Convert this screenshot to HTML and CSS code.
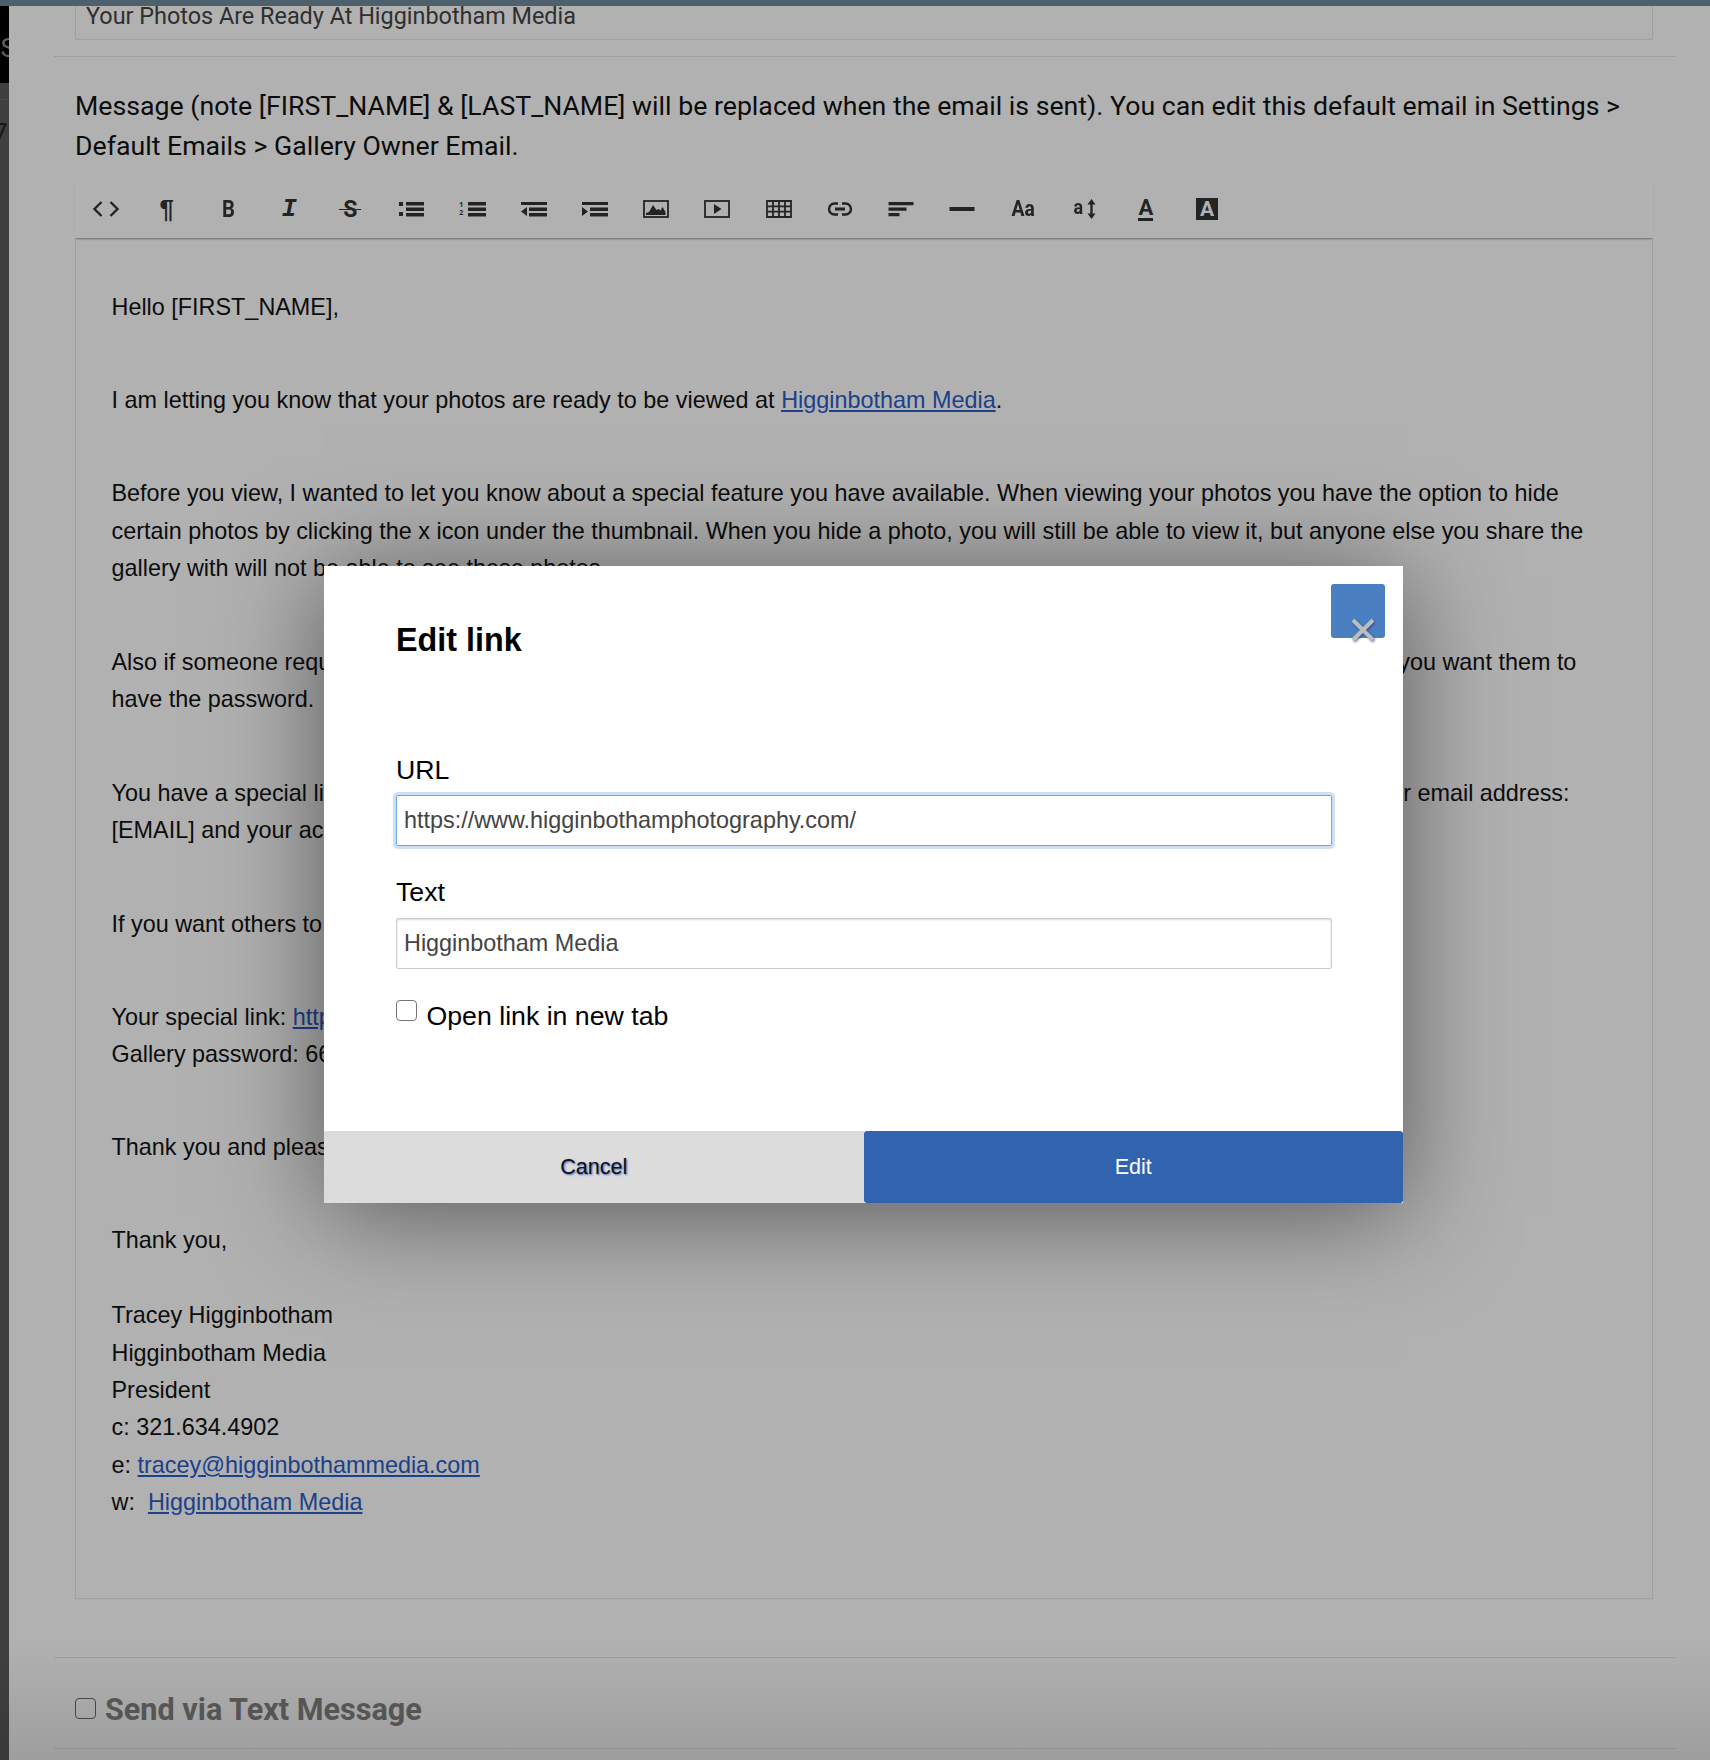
FILE: index.html
```html
<!DOCTYPE html>
<html lang="en">
<head>
<meta charset="utf-8">
<title>Edit link</title>
<link rel="stylesheet" href="styles.css">
</head>
<body>
<div class="topbar"></div>
<div class="shell">
  <aside class="rail">
    <div class="rail-head"><span class="rail-s">S</span></div>
    <div class="rail-line"></div>
    <span class="rail-num">7</span>
  </aside>
  <main class="main">
    <div class="subject">Your Photos Are Ready At Higginbotham Media</div>
    <hr class="rule rule-a">
    <p class="note">Message (note [FIRST_NAME] &amp; [LAST_NAME] will be replaced when the email is sent). You can edit this default email in Settings &gt; Default Emails &gt; Gallery Owner Email.</p>
    <div class="toolbar">
      <span class="tool"><svg class="ico" viewBox="0 0 28 28"><path d="M9.500 7 2.500 14l7 7M18.500 7l7 7-7 7" class="ln"/></svg></span>
      <span class="tool"><span class="glyph para">¶</span></span>
      <span class="tool"><span class="glyph bold">B</span></span>
      <span class="tool"><span class="glyph ital">I</span></span>
      <span class="tool"><span class="glyph strike">S</span></span>
      <span class="tool"><svg class="ico" viewBox="0 0 28 28"><path d="M1 7h4v4H1zM1 17h4v4H1zM8 7h18v3.500H8zM8 12.500h18V16H8zM8 18h18v3.500H8z"/></svg></span>
      <span class="tool"><span class="ol-nums">1<br>2</span><svg class="ico ol" viewBox="0 0 18 28"><path d="M0 7h18v3.500H0zM0 12.500h18V16H0zM0 18h18v3.500H0z"/></svg></span>
      <span class="tool"><svg class="ico" viewBox="0 0 28 28"><path d="M1 7h26v3H1zM9 12.500h18V16H9zM9 18h18v3.500H9zM7 12v9l-6-4.500z"/></svg></span>
      <span class="tool"><svg class="ico" viewBox="0 0 28 28"><path d="M1 7h26v3H1zM9 12.500h18V16H9zM9 18h18v3.500H9zM1 12v9l6-4.500z"/></svg></span>
      <span class="tool"><svg class="ico" viewBox="0 0 28 28"><rect x="2" y="6" width="24" height="16" class="box"/><path d="M4 20v-2l3-1 4-7 3.500 5 2-1 2 1.500 2-3.500 3 5v3z"/></svg></span>
      <span class="tool"><svg class="ico" viewBox="0 0 28 28"><rect x="2" y="6" width="24" height="16" class="box"/><path d="M11 9v10l7.500-5z"/></svg></span>
      <span class="tool"><svg class="ico" viewBox="0 0 28 28"><path d="M2 6h24v16H2zM2 11.300h24M2 16.600h24M8 6v16M14 6v16M20 6v16" class="box"/></svg></span>
      <span class="tool"><svg class="ico" viewBox="0 0 28 28"><path d="M12 8.500H8.500a5.500 5.500 0 0 0 0 11H12M16 8.500h3.500a5.500 5.500 0 0 1 0 11H16" class="ln"/><path d="M9 12.500h10V15.500H9z"/></svg></span>
      <span class="tool"><svg class="ico" viewBox="0 0 28 28"><path d="M1.500 7h25v3.300h-25zM1.500 12.500h18v3.300h-18zM1.500 18h11v3.300h-11z"/></svg></span>
      <span class="tool"><svg class="ico" viewBox="0 0 28 28"><path d="M1.500 12h25v4h-25z"/></svg></span>
      <span class="tool"><span class="glyph aa">Aa</span></span>
      <span class="tool tool-size"><span class="glyph size-a">a</span><svg class="arrow" viewBox="0 0 10 22"><path d="M5 0 9.500 6H6.300v10h3.200L5 22 .5 16h3.200V6H.5z"/></svg></span>
      <span class="tool"><span class="glyph under">A</span></span>
      <span class="tool"><span class="glyph boxed">A</span></span>
    </div>
    <div class="editor">
      <p>Hello [FIRST_NAME],</p>
      <p>I am letting you know that your photos are ready to be viewed at <a href="#">Higginbotham Media</a>.</p>
      <p>Before you view, I wanted to let you know about a special feature you have available. When viewing your photos you have the option to hide<br>certain photos by clicking the x icon under the thumbnail. When you hide a photo, you will still be able to view it, but anyone else you share the<br>gallery with will not be able to see these photos.</p>
      <p>Also if someone requests access to your gallery, you can then approve them in your account and send them the password if you want them to<br>have the password.</p>
      <p>You have a special link that allows you to open all of those photos at any time. You will only need to enter your name and your email address:<br>[EMAIL] and your access code.</p>
      <p>If you want others to see your photos, simply send them the link and the password below.</p>
      <p>Your special link: <a href="#">https://www.higginbothamphotography.com/</a><br>Gallery password: 6677</p>
      <p class="tight">Thank you and please let me know if you have any questions.</p>
      <p>Thank you,<br><br>Tracey Higginbotham<br>Higginbotham Media<br>President<br>c: 321.634.4902<br>e: <a href="#">tracey@higginbothammedia.com</a><br>w:&nbsp; <a href="#">Higginbotham Media</a></p>
    </div>
    <hr class="rule rule-b">
    <label class="sms"><input type="checkbox" class="check check-sms"><span>Send via Text Message</span></label>
    <hr class="rule rule-c">
  </main>
</div>
<div class="overlay"></div>
<section class="modal">
  <span class="close"><svg class="close-x" viewBox="0 0 26 26"><path d="M3 3l20 20M23 3 3 23"/></svg></span>
  <div class="modal-body">
    <h2 class="modal-title">Edit link</h2>
    <div class="label label-url">URL</div>
    <div class="field field-focus">https://www.higginbothamphotography.com/</div>
    <div class="label label-text">Text</div>
    <div class="field">Higginbotham Media</div>
    <label class="newtab"><input type="checkbox" class="check"><span>Open link in new tab</span></label>
  </div>
  <div class="modal-foot">
    <span class="btn btn-cancel">Cancel</span>
    <span class="btn btn-edit">Edit</span>
  </div>
</section>
</body>
</html>
```
FILE: styles.css
```css
* { box-sizing: border-box; }
html, body { margin: 0; padding: 0; }
body {
  width: 1710px;
  height: 1760px;
  overflow: hidden;
  background: #fff;
  color: #111;
  font-family: "Liberation Sans", Arial, sans-serif;
  position: relative;
}
.topbar { height: 6px; background: #6f8a9c; }
.shell { display: flex; height: 1754px; }
.rail { width: 9px; flex: none; background: #5c5c5c; overflow: hidden; display: flex; flex-direction: column; }
.rail-head { height: 77px; background: #000; padding-top: 25px; display: flex; justify-content: flex-end; }
.rail-s { font: 400 26px/34px Roboto, sans-serif; color: #8a8a8a; margin-right: -7px; }
.rail-line { height: 1px; margin-top: 16px; background: #3c6fb0; }
.rail-num { font: 400 26px/34px Roboto, sans-serif; color: #222; margin-top: 16px; margin-left: -7px; }
.main { flex: 1; padding: 0 35px 0 45px; font-family: Roboto, sans-serif; }
.subject {
  margin: 0 22px 0 21px;
  height: 34px;
  padding: 0 10px;
  border: 1px solid #e6e6e6;
  border-top: 0;
  border-radius: 0 0 3px 3px;
  font-size: 23.4px;
  line-height: 20px;
  color: #444;
}
.rule { margin: 0; border: 0; border-top: 1px solid #e4e4e4; }
.rule-a { margin-top: 16px; }
.note { margin: 29px 22px 14px 21px; font-size: 26.7px; line-height: 40px; color: #111; }
.toolbar {
  margin: 0 22px 0 21px;
  height: 58px;
  display: flex;
  align-items: center;
  background: #fff;
  box-shadow: 0 2px 2px -1px rgba(0,0,0,.4);
  position: relative;
  color: #333;
}
.tool { width: 61.2px; height: 30px; flex: none; display: flex; align-items: center; justify-content: center; position: relative; }
.ico { width: 28px; height: 28px; fill: #333; display: block; }
.ln { fill: none; stroke: #333; stroke-width: 2.4; }
.box { fill: none; stroke: #333; stroke-width: 1.8; }
.glyph { font-family: Roboto, sans-serif; font-weight: 700; color: #333; line-height: 1; display: block; }
.para { font-size: 26px; font-family: "Liberation Sans", sans-serif; }
.bold { font-size: 23px; transform: scaleX(.88); }
.ital { font-family: "Liberation Mono", monospace; font-style: italic; font-size: 25px; }
.strike { font-size: 23px; position: relative; }
.strike::after { content: ""; position: absolute; left: -4px; right: -4px; top: 11px; height: 1.500px; background: #333; }
.aa { font-size: 22px; transform: scaleX(.88); }
.ol { width: 18px; margin-left: 5px; }
.ol-nums { font: 700 7px/8px "Noto Sans", sans-serif; color: #333; text-align: center; }
.tool-size { gap: 3px; }
.size-a { font-size: 20px; margin-top: -4px; transform: scaleX(.9); }
.arrow { width: 9px; height: 22px; fill: #333; }
.under { font-size: 22px; border-bottom: 3px solid #333; line-height: 20px; height: 23px; width: 15px; text-align: center; }
.boxed { width: 22px; height: 22px; background: #333; color: #fff; font-size: 21px; line-height: 22px; text-align: center; }
.editor {
  margin: 0 22px 0 21px;
  height: 1361px;
  padding: 50.6px 35.5px 0;
  border: 1px solid #e6e6e6;
  border-top: 0;
  font-family: "Liberation Sans", Arial, sans-serif;
  font-size: 23.4px;
  line-height: 37.44px;
  color: #111;
  white-space: nowrap;
}
.editor p { margin: 0 0 56px; }
.editor p.tight { margin-top: -1px; }
.editor a { color: #2a5cc7; }
.rule-b { margin-top: 58px; }
.sms { margin: 38px 21px 0; height: 26px; display: flex; align-items: center; gap: 9px; font-size: 30.6px; font-weight: 700; color: #838383; }
.rule-c { margin-top: 26px; }
.check { appearance: none; -webkit-appearance: none; margin: 0; width: 21px; height: 21px; border: 1.5px solid #767676; border-radius: 4px; background: #fff; flex: none; }
.check-sms { border-color: #6a6a6a; margin-top: -2px; }
.overlay {
  position: absolute;
  inset: 0;
  background: linear-gradient(to bottom, rgba(0,0,0,.305) 0, rgba(0,0,0,.305) 1640px, rgba(0,0,0,.38) 1760px);
}
.modal {
  position: absolute;
  left: 324px;
  top: 566px;
  width: 1079px;
  height: 637px;
  background: #fff;
  box-shadow: 0 10px 100px rgba(0,0,0,.5);
  display: flex;
  flex-direction: column;
}
.close { position: absolute; top: 18px; right: 18px; width: 54px; height: 54px; background: #4a7fc1; border-radius: 3px; }
.close-x { position: absolute; left: 19px; top: 33px; width: 26px; height: 26px; fill: none; stroke: #bdbdbd; stroke-width: 4; overflow: visible; filter: drop-shadow(1px 1px 1px rgba(30,60,120,.7)); }
.modal-body { flex: 1; padding: 0 71px 0 72px; }
.modal-title { margin: 54px 0 0; font-size: 32.3px; line-height: 40px; font-weight: 700; color: #000; }
.label { font-size: 26.7px; line-height: 32px; color: #000; }
.label-url { margin-top: 94px; margin-bottom: 8.500px; }
.label-text { margin-top: 30.600px; margin-bottom: 9.500px; }
.field {
  height: 51px;
  padding: 0 7px;
  border: 1px solid #ccc;
  border-radius: 2px;
  box-shadow: inset 0 1px 2px rgba(0,0,0,.15);
  font-size: 23.4px;
  line-height: 49px;
  color: #444;
}
.field-focus { border-color: #6fa6e6; box-shadow: 0 0 0 3px #cfe0f5; }
.newtab { margin-top: 31px; display: flex; align-items: flex-start; gap: 9.500px; font-size: 26.7px; line-height: 32px; color: #000; }
.modal-foot { height: 72px; display: flex; }
.btn { flex: 1; display: flex; align-items: center; justify-content: center; font-size: 21.6px; }
.btn-cancel { background: #dcdcdc; color: #111; text-shadow: 1px 1px 2px rgba(40,90,190,.9); }
.btn-edit { background: #3263ae; color: #fff; border-radius: 3px; }
```
